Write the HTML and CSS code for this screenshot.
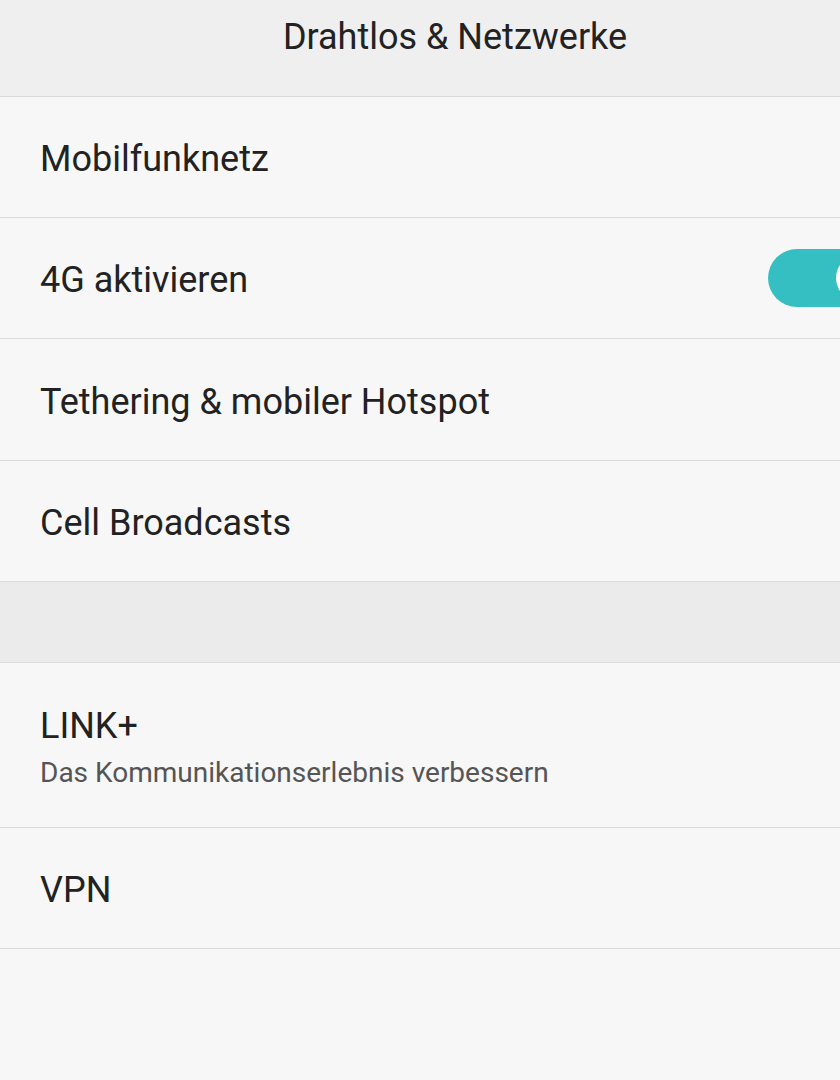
FILE: index.html
```html
<!DOCTYPE html>
<html>

<head>
    <meta charset="UTF-8">
    <title>Drahtlos &amp; Netzwerke</title>
    <link rel="stylesheet" href="styles.css">
</head>

<body>
    <header class="titlebar">
        <h1>Drahtlos &amp; Netzwerke</h1>
    </header>

    <ul class="list">
        <li class="item"><span class="label">Mobilfunknetz</span></li>
        <li class="item">
            <span class="label">4G aktivieren</span>
            <span class="switch on"><span class="knob"></span></span>
        </li>
        <li class="item"><span class="label">Tethering &amp; mobiler Hotspot</span></li>
        <li class="item"><span class="label">Cell Broadcasts</span></li>
    </ul>

    <div class="spacer"></div>

    <ul class="list">
        <li class="item tall">
            <div class="texts">
                <span class="label">LINK+</span>
                <span class="summary">Das Kommunikationserlebnis verbessern</span>
            </div>
        </li>
        <li class="item"><span class="label">VPN</span></li>
    </ul>
</body>

</html>
```

FILE: styles.css
```css
* {
    box-sizing: border-box;
    margin: 0;
    padding: 0;
}

html,
body {
    background-color: #f7f7f7;
    color: #222;
    font-family: Roboto, "Noto Sans", sans-serif;
    overflow: hidden;
}

body {
    width: 840px;
    height: 1080px;
}

.titlebar {
    height: 97px;
    background-color: #efefef;
    border-bottom: 1px solid #d9d9d9;
    display: flex;
    justify-content: center;
    padding-top: 16px;
}

.titlebar h1 {
    font-size: 36px;
    font-weight: 400;
    color: #222;
    margin-left: 70px;
}

.list {
    list-style: none;
}

.item {
    height: 121px;
    padding-left: 40px;
    padding-top: 4px;
    border-bottom: 1px solid #dcdcdc;
    display: flex;
    align-items: center;
    justify-content: space-between;
    background-color: #f7f7f7;
    overflow: hidden;
}

.item:nth-child(3) {
    height: 122px;
}

.item.tall {
    height: 165px;
}

.label {
    font-size: 36px;
    color: #222;
}

.texts {
    display: flex;
    flex-direction: column;
    gap: 9px;
}

.summary {
    font-size: 28px;
    color: #555;
}

.switch {
    flex-shrink: 0;
    width: 120px;
    height: 58px;
    border-radius: 29px;
    background-color: #36bfc2;
    margin-right: -48px;
    margin-top: -4px;
    position: relative;
}

.switch .knob {
    position: absolute;
    top: 6px;
    right: 6px;
    width: 46px;
    height: 46px;
    border-radius: 50%;
    background-color: #fff;
}

.spacer {
    height: 81px;
    background-color: #ebebeb;
    border-bottom: 1px solid #dcdcdc;
}
```
